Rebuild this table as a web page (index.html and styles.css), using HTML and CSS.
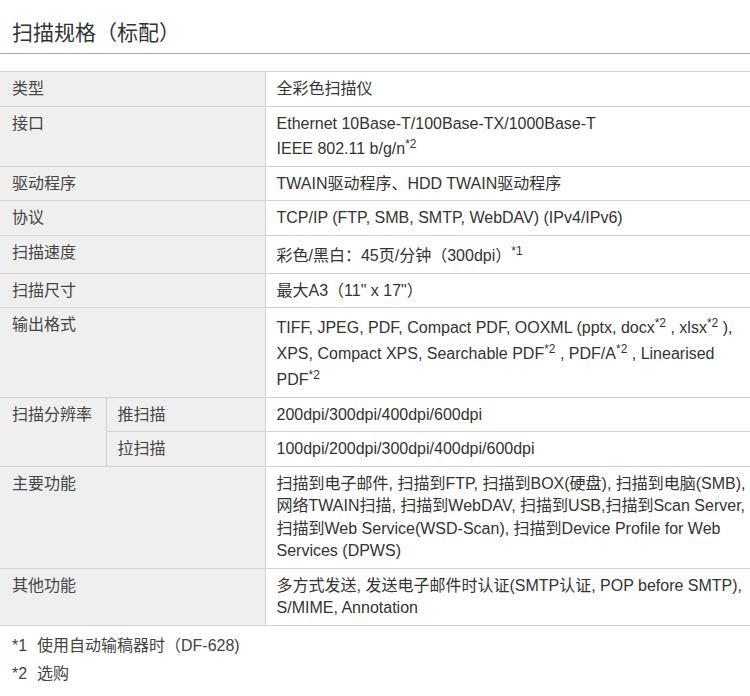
FILE: index.html
```html
<!DOCTYPE html>
<html lang="zh-CN">
<head>
<meta charset="utf-8">
<title>扫描规格（标配）</title>
<link rel="stylesheet" href="styles.css">
</head>
<body>
<div class="page">
  <h2 class="title">扫描规格（标配）</h2>
  <table class="spec">
    <colgroup>
      <col class="c1"><col class="c2"><col class="c3">
    </colgroup>
    <tbody>
      <tr><th colspan="2">类型</th><td>全彩色扫描仪</td></tr>
      <tr><th colspan="2">接口</th><td>Ethernet 10Base-T/100Base-TX/1000Base-T<br>IEEE 802.11 b/g/n<sup>*2</sup></td></tr>
      <tr><th colspan="2">驱动程序</th><td>TWAIN驱动程序、HDD TWAIN驱动程序</td></tr>
      <tr><th colspan="2">协议</th><td>TCP/IP (FTP, SMB, SMTP, WebDAV) (IPv4/IPv6)</td></tr>
      <tr><th colspan="2">扫描速度</th><td>彩色/黑白：45页/分钟（300dpi）<sup>*1</sup></td></tr>
      <tr><th colspan="2">扫描尺寸</th><td>最大A3（11" x 17"）</td></tr>
      <tr><th colspan="2">输出格式</th><td>TIFF, JPEG, PDF, Compact PDF, OOXML (pptx, docx<sup>*2</sup> , xlsx<sup>*2</sup> ), XPS, Compact XPS, Searchable PDF<sup>*2</sup> , PDF/A<sup>*2</sup> , Linearised PDF<sup>*2</sup></td></tr>
      <tr><th rowspan="2">扫描分辨率</th><th class="sub">推扫描</th><td>200dpi/300dpi/400dpi/600dpi</td></tr>
      <tr><th class="sub">拉扫描</th><td>100dpi/200dpi/300dpi/400dpi/600dpi</td></tr>
      <tr><th colspan="2">主要功能</th><td>扫描到电子邮件, 扫描到FTP, 扫描到BOX(硬盘), 扫描到电脑(SMB), 网络TWAIN扫描, 扫描到WebDAV, 扫描到USB,扫描到Scan Server, 扫描到Web Service(WSD-Scan), 扫描到Device Profile for Web Services (DPWS)</td></tr>
      <tr><th colspan="2">其他功能</th><td>多方式发送, 发送电子邮件时认证(SMTP认证, POP before SMTP), S/MIME, Annotation</td></tr>
    </tbody>
  </table>
  <ul class="notes">
    <li><span class="mark">*1</span>使用自动输稿器时（DF-628)</li>
    <li><span class="mark">*2</span>选购</li>
  </ul>
</div>
</body>
</html>
```
FILE: styles.css
```css
html, body {
  margin: 0;
  padding: 0;
  background: #fff;
  overflow: hidden;
}
.page {
  font-family: "Liberation Sans", Arial, "Noto Sans CJK SC", sans-serif;
  font-size: 16px;
  color: #333;
}
.title {
  margin: 0;
  padding: 18px 12px 6px;
  font-size: 21px;
  font-weight: normal;
  line-height: 29px;
  color: #333;
  border-bottom: 1px solid #aaa;
}
.spec {
  margin-top: 17px;
  width: 100%;
  border-collapse: collapse;
  table-layout: fixed;
}
.c1 { width: 106px; }
.c2 { width: 159px; }
.spec th, .spec td {
  border: 1px solid #d3d3d3;
  padding: 6px 12px 5px 11px;
  line-height: 22.5px;
  text-align: left;
  vertical-align: top;
  font-weight: normal;
}
.spec th {
  background: #efefef;
  color: #444;
}
.spec td {
  border-right: none;
  padding-left: 11px;
  padding-right: 2px;
  color: #333;
}
.spec th:first-child {
  border-left: none;
  padding-left: 12px;
}
.spec th.sub {
  padding-left: 11px;
}
.spec sup {
  font-size: 12px;
  line-height: 18px;
}
.notes {
  list-style: none;
  margin: 0;
  padding: 6px 0 0 12px;
}
.notes li {
  line-height: 28px;
  color: #444;
}
.notes .mark {
  display: inline-block;
  width: 25px;
}
```
